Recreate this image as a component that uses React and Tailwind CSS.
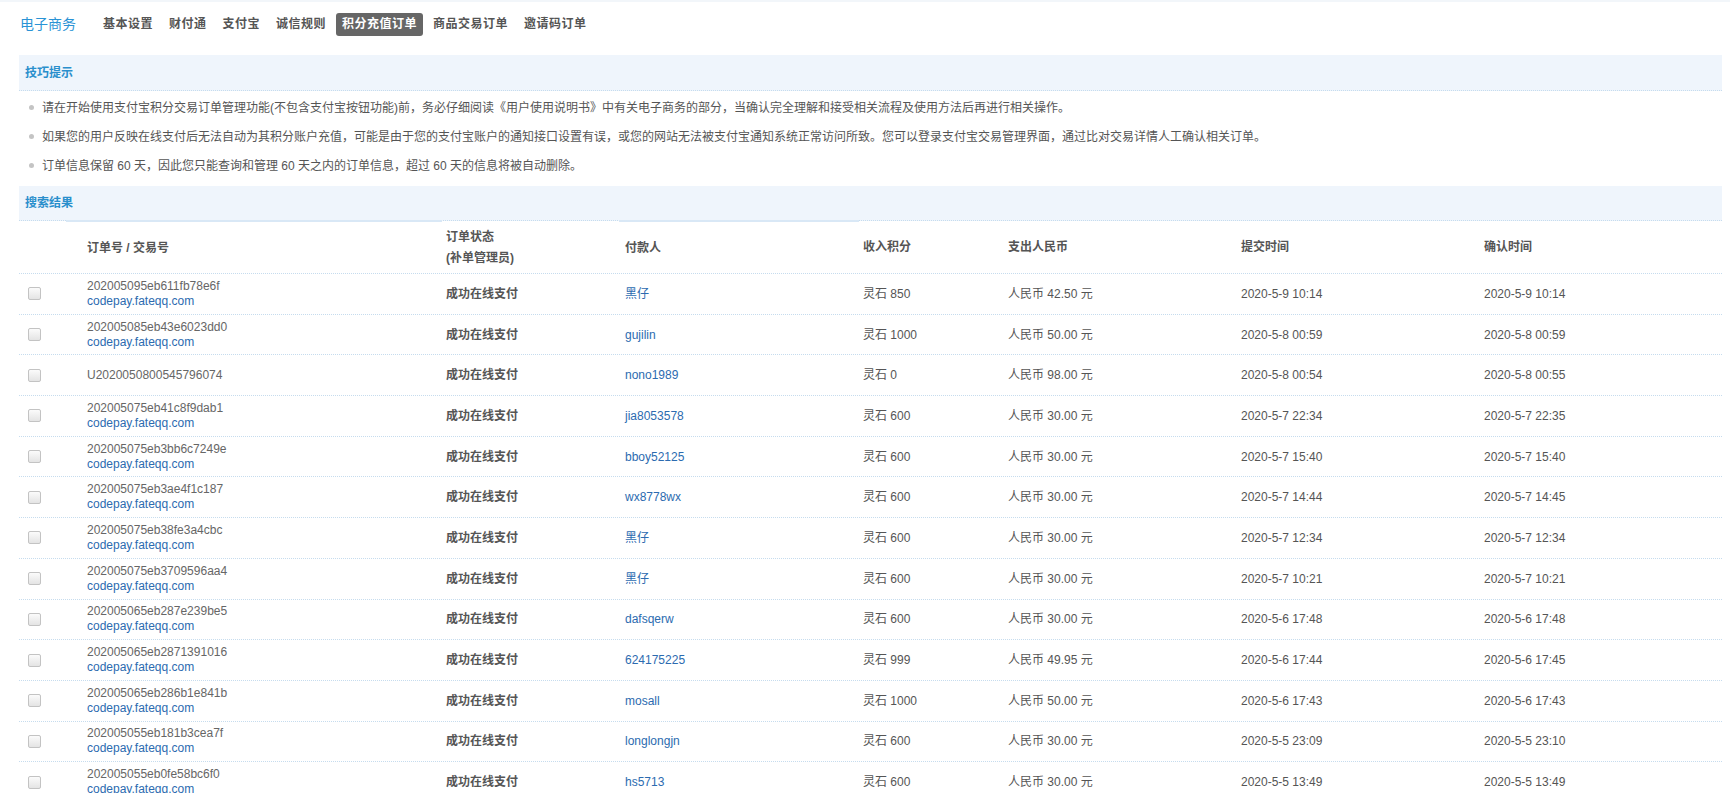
import React from 'react';

const navItems = ['基本设置', '财付通', '支付宝', '诚信规则', '积分充值订单', '商品交易订单', '邀请码订单'];

const tips = [
  '请在开始使用支付宝积分交易订单管理功能(不包含支付宝按钮功能)前，务必仔细阅读《用户使用说明书》中有关电子商务的部分，当确认完全理解和接受相关流程及使用方法后再进行相关操作。',
  '如果您的用户反映在线支付后无法自动为其积分账户充值，可能是由于您的支付宝账户的通知接口设置有误，或您的网站无法被支付宝通知系统正常访问所致。您可以登录支付宝交易管理界面，通过比对交易详情人工确认相关订单。',
  '订单信息保留 60 天，因此您只能查询和管理 60 天之内的订单信息，超过 60 天的信息将被自动删除。',
];

const orders = [
  { id: '202005095eb611fb78e6f', site: true, payer: '黑仔', pts: '850', rmb: '42.50', submit: '2020-5-9 10:14', confirm: '2020-5-9 10:14' },
  { id: '202005085eb43e6023dd0', site: true, payer: 'gujilin', pts: '1000', rmb: '50.00', submit: '2020-5-8 00:59', confirm: '2020-5-8 00:59' },
  { id: 'U2020050800545796074', site: false, payer: 'nono1989', pts: '0', rmb: '98.00', submit: '2020-5-8 00:54', confirm: '2020-5-8 00:55' },
  { id: '202005075eb41c8f9dab1', site: true, payer: 'jia8053578', pts: '600', rmb: '30.00', submit: '2020-5-7 22:34', confirm: '2020-5-7 22:35' },
  { id: '202005075eb3bb6c7249e', site: true, payer: 'bboy52125', pts: '600', rmb: '30.00', submit: '2020-5-7 15:40', confirm: '2020-5-7 15:40' },
  { id: '202005075eb3ae4f1c187', site: true, payer: 'wx8778wx', pts: '600', rmb: '30.00', submit: '2020-5-7 14:44', confirm: '2020-5-7 14:45' },
  { id: '202005075eb38fe3a4cbc', site: true, payer: '黑仔', pts: '600', rmb: '30.00', submit: '2020-5-7 12:34', confirm: '2020-5-7 12:34' },
  { id: '202005075eb3709596aa4', site: true, payer: '黑仔', pts: '600', rmb: '30.00', submit: '2020-5-7 10:21', confirm: '2020-5-7 10:21' },
  { id: '202005065eb287e239be5', site: true, payer: 'dafsqerw', pts: '600', rmb: '30.00', submit: '2020-5-6 17:48', confirm: '2020-5-6 17:48' },
  { id: '202005065eb2871391016', site: true, payer: '624175225', pts: '999', rmb: '49.95', submit: '2020-5-6 17:44', confirm: '2020-5-6 17:45' },
  { id: '202005065eb286b1e841b', site: true, payer: 'mosall', pts: '1000', rmb: '50.00', submit: '2020-5-6 17:43', confirm: '2020-5-6 17:43' },
  { id: '202005055eb181b3cea7f', site: true, payer: 'longlongjn', pts: '600', rmb: '30.00', submit: '2020-5-5 23:09', confirm: '2020-5-5 23:10' },
  { id: '202005055eb0fe58bc6f0', site: true, payer: 'hs5713', pts: '600', rmb: '30.00', submit: '2020-5-5 13:49', confirm: '2020-5-5 13:49' },
];

const cols = 'grid grid-cols-[47px_376px_177px_240px_145px_233px_243px_1fr]';

const App = () => {
  return (
    <div className="min-h-screen bg-white border-t-2 border-[#f2f6fa] pl-[19px] pr-[8px] text-[12px] text-[#555] font-['Liberation_Sans','Noto_Sans_CJK_SC',sans-serif]">
      {/* top nav */}
      <div className="flex items-center h-[23px] mt-[11px]">
        <span className="ml-[1px] text-[14px] text-[#2a93d5]">电子商务</span>
        <div className="ml-[21px] flex gap-[4px]">
          {navItems.map((item) => (
            <a
              key={item}
              className={
                item === '积分充值订单'
                  ? 'px-[6px] h-[23px] leading-[23px] rounded-[3px] bg-[#666] text-white font-bold tracking-[0.5px]'
                  : 'px-[6px] h-[23px] leading-[23px] text-[#555] font-bold tracking-[0.5px]'
              }
            >
              {item}
            </a>
          ))}
        </div>
      </div>

      {/* tips */}
      <div className="mt-[19px] h-[36px] flex items-center pl-[6px] bg-[#eff5fc] border-b border-dotted border-[#c6dcee] font-bold text-[#2a8fcc]">
        技巧提示
      </div>
      <ul className="pt-[2px]">
        {tips.map((t, i) => (
          <li key={i} className="h-[29px] flex items-center">
            <span className="ml-[10px] w-[5px] h-[5px] rounded-full bg-[#c4c4c4]"></span>
            <span className="ml-[8px]">{t}</span>
          </li>
        ))}
      </ul>

      {/* results */}
      <div className="mt-[6px] h-[35px] flex items-center pl-[6px] bg-[#eff5fc] border-b border-dotted border-[#c6dcee] font-bold text-[#2a8fcc]">
        搜索结果
      </div>
      <div className={`${cols} -mt-px h-[54px] items-center border-b border-dotted border-[#c6dcee] font-bold text-[#555]`}>
        <div className="self-stretch border-t-2 border-transparent"></div>
        <div className="self-stretch flex items-center pl-[21px] border-t-2 border-[#d9e8f6]">订单号 / 交易号</div>
        <div className="self-stretch flex flex-col justify-center pl-[4px] leading-[21px] border-t-2 border-transparent">
          <span>订单状态</span>
          <span>(补单管理员)</span>
        </div>
        <div className="self-stretch flex items-center pl-[6px] border-t-2 border-[#d9e8f6]">付款人</div>
        <div className="pl-[4px]">收入积分</div>
        <div className="pl-[4px]">支出人民币</div>
        <div className="pl-[4px]">提交时间</div>
        <div className="pl-[4px]">确认时间</div>
      </div>

      {orders.map((o) => (
        <div key={o.id} className={`${cols} h-[40.7px] items-center border-b border-dotted border-[#c6dcee]`}>
          <div className="pl-[9px] flex items-center">
            <input
              type="checkbox"
              className="appearance-none m-0 w-[13px] h-[13px] rounded-[2px] border border-[#c3c3c3] bg-gradient-to-b from-[#fbfbfb] to-[#e4e4e4]"
            />
          </div>
          <div className="pl-[21px] leading-[15px]">
            <div className="text-[#666]">{o.id}</div>
            {o.site && <div className="text-[#2c6bb0]">codepay.fateqq.com</div>}
          </div>
          <div className="pl-[4px] font-bold">成功在线支付</div>
          <div className="pl-[6px] text-[#2c6bb0]">{o.payer}</div>
          <div className="pl-[4px]">灵石 {o.pts}</div>
          <div className="pl-[4px]">人民币 {o.rmb} 元</div>
          <div className="pl-[4px]">{o.submit}</div>
          <div className="pl-[4px]">{o.confirm}</div>
        </div>
      ))}
    </div>
  );
};

export default App;
